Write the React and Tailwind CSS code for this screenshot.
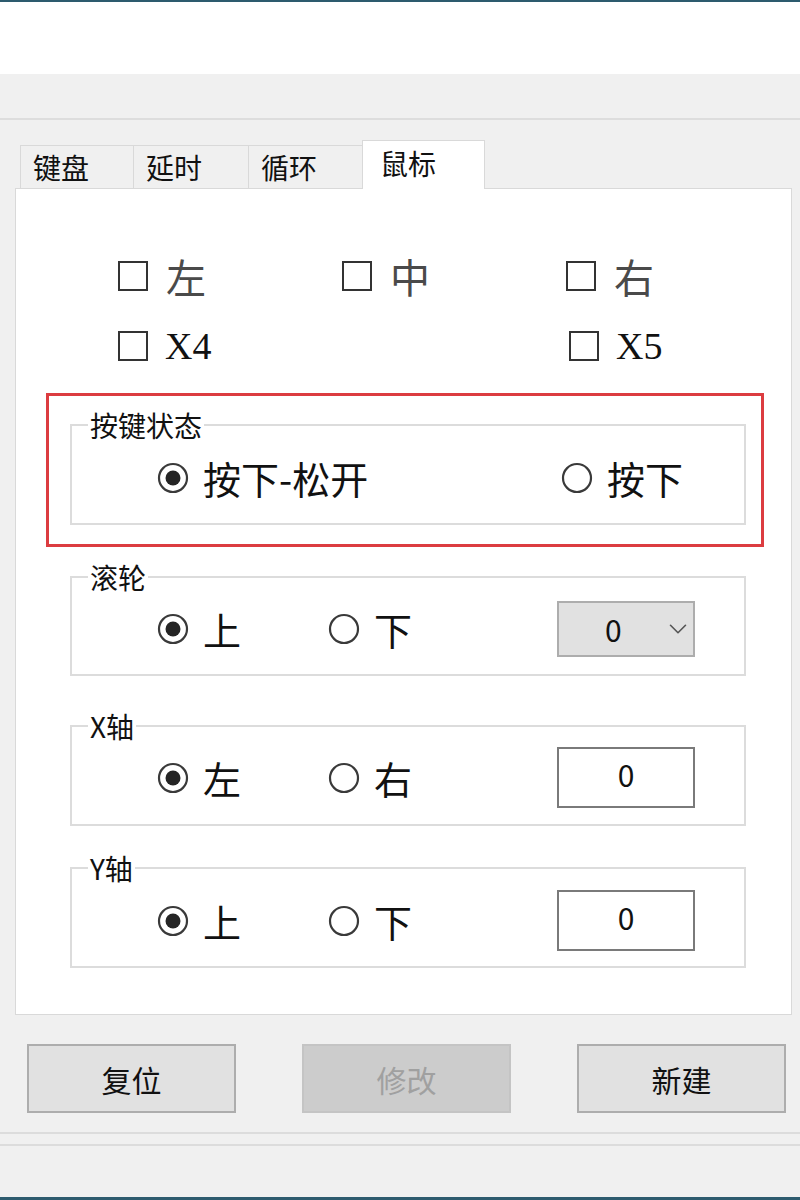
import React from 'react';
import { ChevronDown } from 'lucide-react';

function Radio({ checked }) {
  return (
    <svg width="32" height="32" viewBox="0 0 32 32" className="shrink-0">
      <circle cx="16" cy="16" r="14" fill="white" stroke="#3a3a3a" strokeWidth="2.2" />
      {checked && <circle cx="16" cy="16" r="7.5" fill="#252525" />}
    </svg>
  );
}

function RadioItem({ checked, label, className }) {
  return (
    <div className={`flex items-center ${className}`}>
      <Radio checked={checked} />
      <span className="ml-[14px] text-[38px] leading-none text-[#111]">{label}</span>
    </div>
  );
}

function CheckItem({ label, className, latin }) {
  return (
    <div className={`flex items-center ${className}`}>
      <span className="w-[30px] h-[30px] border-2 border-[#333] bg-white shrink-0" />
      <span
        className={
          latin
            ? "ml-[17px] text-[38px] leading-none text-[#111] font-['Liberation_Serif','Noto_Sans_CJK_SC',serif]"
            : "ml-[18px] text-[40px] leading-none text-[#4a4a4a] font-['Noto_Sans_CJK_SC',serif]"
        }
      >
        {label}
      </span>
    </div>
  );
}

function Group({ label, className, children }) {
  return (
    <fieldset className={`w-[676px] border-2 border-[#dcdcdc] ${className}`}>
      <legend className="ml-[16px] px-[2px] text-[28px] leading-[34px] text-[#111]">{label}</legend>
      {children}
    </fieldset>
  );
}

function ValueBox({ value }) {
  return (
    <div className="w-[138px] h-[61px] border-2 border-[#7a7a7a] bg-white flex justify-center pt-[10px] text-[30px] leading-none text-[#111]">
      {value}
    </div>
  );
}

function App() {
  const tabs = [
    { name: '键盘', w: 'w-[113px]' },
    { name: '延时', w: 'w-[115px]' },
    { name: '循环', w: 'w-[114px]' },
  ];

  return (
    <div className="w-[800px] h-[1200px] bg-[#f0f0f0] flex flex-col overflow-hidden font-['Noto_Sans_CJK_SC','Microsoft_YaHei',sans-serif]">
      <div className="h-[2px] bg-[#2d5b6e]" />
      <div className="h-[72px] bg-white" />
      <div className="h-[44px]" />
      <div className="h-[2px] bg-[#dddddd]" />

      {/* tabs */}
      <div className="relative z-10 flex items-end h-[68px] pl-[20px]">
        {tabs.map((t) => (
          <div
            key={t.name}
            className={`${t.w} h-[43px] border-t border-l border-[#d9d9d9] bg-[#f0f0f0] pl-[12px] pt-[7px] text-[28px] leading-none text-[#111]`}
          >
            {t.name}
          </div>
        ))}
        <div className="w-[123px] h-[49px] -mb-px border border-b-0 border-[#d9d9d9] bg-white pl-[17px] pt-[8px] text-[28px] leading-none text-[#111]">
          鼠标
        </div>
      </div>

      {/* panel */}
      <div className="ml-[15px] w-[777px] h-[827px] border border-[#d9d9d9] bg-white flex flex-col">
        <div className="flex h-[44px] mt-[65px] pl-[102px]">
          <CheckItem label="左" className="w-[224px]" />
          <CheckItem label="中" className="w-[224px]" />
          <CheckItem label="右" />
        </div>
        <div className="flex h-[44px] mt-[26px] pl-[102px]">
          <CheckItem label="X4" latin className="w-[451px]" />
          <CheckItem label="X5" latin />
        </div>

        <div className="ml-[30px] mt-[25px] w-[718px] border-[3px] border-[#dc3c40] pt-[12px] pb-[19px] pl-[21px]">
          <Group label="按键状态">
            <div className="flex items-center h-[40px] mt-[16px] mb-[25px] pl-[85px]">
              <RadioItem checked label="按下-松开" className="w-[404px]" />
              <RadioItem label="按下" />
            </div>
          </Group>
        </div>

        <Group label="滚轮" className="ml-[54px] mt-[13px]">
          <div className="flex items-center h-[56px] mt-[7px] mb-[17px] pl-[85px]">
            <RadioItem checked label="上" className="w-[171px]" />
            <RadioItem label="下" className="w-[229px]" />
            <div className="w-[138px] h-[56px] border-2 border-[#adadad] bg-[#e1e1e1] flex items-center pl-[46px] text-[30px] leading-none text-[#111]">
              <span className="w-[58px]">0</span>
              <ChevronDown size={30} strokeWidth={1.3} color="#555" />
            </div>
          </div>
        </Group>

        <Group label="X轴" className="ml-[54px] mt-[33px]">
          <div className="flex items-center h-[61px] mt-[4px] mb-[16px] pl-[85px]">
            <RadioItem checked label="左" className="w-[171px]" />
            <RadioItem label="右" className="w-[229px]" />
            <ValueBox value="0" />
          </div>
        </Group>

        <Group label="Y轴" className="ml-[54px] mt-[25px]">
          <div className="flex items-center h-[61px] mt-[5px] mb-[15px] pl-[85px]">
            <RadioItem checked label="上" className="w-[171px]" />
            <RadioItem label="下" className="w-[229px]" />
            <ValueBox value="0" />
          </div>
        </Group>
      </div>

      {/* buttons */}
      <div className="flex gap-[66px] pl-[27px] mt-[29px]">
        <button className="w-[209px] h-[69px] border-2 border-[#adadad] bg-[#e1e1e1] text-[30px] leading-none text-[#111]">
          复位
        </button>
        <button disabled className="w-[209px] h-[69px] border-2 border-[#c4c4c4] bg-[#cccccc] text-[30px] leading-none text-[#a0a0a0]">
          修改
        </button>
        <button className="w-[209px] h-[69px] border-2 border-[#adadad] bg-[#e1e1e1] text-[30px] leading-none text-[#111]">
          新建
        </button>
      </div>

      <div className="h-[2px] bg-[#dcdcdc] mt-[19px]" />
      <div className="h-[2px] bg-[#dcdcdc] mt-[10px]" />
      <div className="flex-1" />
      <div className="h-[3px] bg-[#2d5b6e]" />
    </div>
  );
}

export default App;
